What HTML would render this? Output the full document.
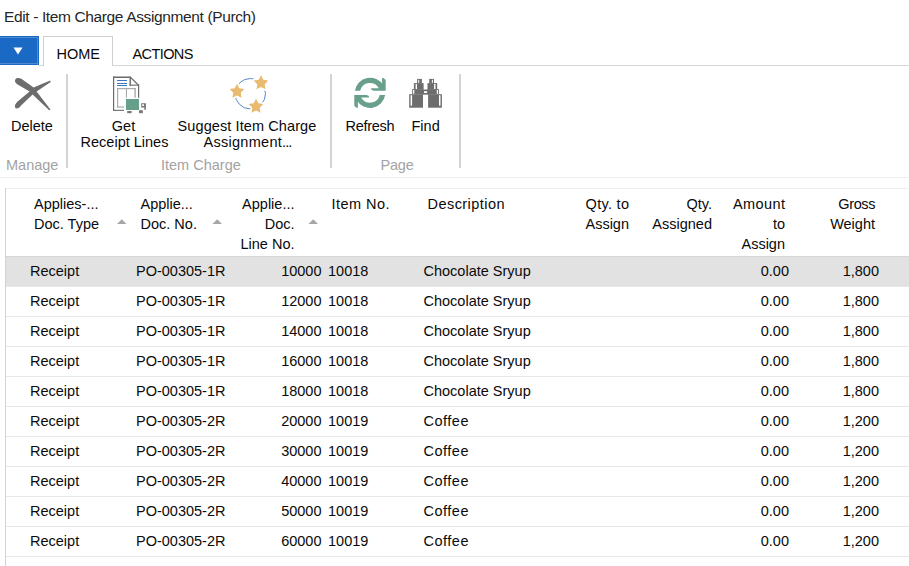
<!DOCTYPE html>
<html><head><meta charset="utf-8">
<style>
*{box-sizing:border-box}
html,body{margin:0;padding:0}
body{width:909px;height:566px;overflow:hidden;background:#fff;position:relative;font-family:"Liberation Sans",sans-serif;color:#0a0a0a}
.t{position:absolute;white-space:nowrap;line-height:20px;font-size:14.5px}
.g{color:#a3a3a3}
.ln{position:absolute}
svg{position:absolute;left:0;top:0;overflow:visible}
</style></head><body>
<div class="t " style="top:6.80px;font-size:15.5px;letter-spacing:-0.37px;left:4px;color:#262626;">Edit - Item Charge Assignment (Purch)</div>
<div style="position:absolute;left:0;top:36px;width:39px;height:29px;background:#1a69c4;box-shadow:inset -1px 1px 0 #1a69c4, inset -2px 2px 0 #4c8ad2, inset 0 -1px 0 #1a69c4, inset 0 -2px 0 #4c8ad2"></div>
<div class="ln" style="left:39px;top:65px;width:870px;height:1px;background:#d6d6d6"></div>
<div style="position:absolute;left:43px;top:36px;width:70px;height:30px;background:#fff;border:1px solid #cfcfcf;border-bottom:none"></div>
<div class="t " style="top:43.80px;left:56.5px;">HOME</div>
<div class="t " style="top:43.80px;letter-spacing:-0.6px;left:132.5px;">ACTIONS</div>
<div class="ln" style="left:66px;top:74px;width:2px;height:94px;background:#d3d3d3"></div>
<div class="ln" style="left:330px;top:74px;width:2px;height:94px;background:#d3d3d3"></div>
<div class="ln" style="left:459px;top:74px;width:2px;height:94px;background:#d3d3d3"></div>
<div class="ln" style="left:0;top:177px;width:909px;height:1px;background:#efefef"></div>
<div class="t " style="top:116.00px;left:11px;">Delete</div>
<div class="t g" style="top:155.00px;left:6px;">Manage</div>
<div class="t " style="top:116.00px;left:-26.5px;width:300px;text-align:center;">Get</div>
<div class="t " style="top:131.50px;left:-25.5px;width:300px;text-align:center;">Receipt Lines</div>
<div class="t " style="top:116.00px;letter-spacing:0.1px;left:97px;width:300px;text-align:center;">Suggest Item Charge</div>
<div class="t " style="top:131.50px;left:203.5px;"><span style="letter-spacing:0.28px">Assignment</span><span style="letter-spacing:-0.9px">...</span></div>
<div class="t g" style="top:155.00px;left:161px;">Item Charge</div>
<div class="t " style="top:116.00px;letter-spacing:-0.3px;left:345.5px;">Refresh</div>
<div class="t " style="top:116.00px;left:411.5px;">Find</div>
<div class="t g" style="top:155.00px;letter-spacing:-0.2px;left:380.5px;">Page</div>
<div class="ln" style="left:5px;top:188px;width:904px;height:1px;background:#eeeeee"></div>
<div class="ln" style="left:5px;top:188px;width:1px;height:378px;background:#d3d3d3"></div>
<div class="ln" style="left:6px;top:256px;width:903px;height:30px;background:#e2e2e2"></div>
<div class="ln" style="left:6px;top:256px;width:903px;height:1px;background:#d6d6d6"></div>
<div class="ln" style="left:6px;top:286px;width:903px;height:1px;background:#e8e8e8"></div>
<div class="ln" style="left:6px;top:316px;width:903px;height:1px;background:#e8e8e8"></div>
<div class="ln" style="left:6px;top:346px;width:903px;height:1px;background:#e8e8e8"></div>
<div class="ln" style="left:6px;top:376px;width:903px;height:1px;background:#e8e8e8"></div>
<div class="ln" style="left:6px;top:406px;width:903px;height:1px;background:#e8e8e8"></div>
<div class="ln" style="left:6px;top:436px;width:903px;height:1px;background:#e8e8e8"></div>
<div class="ln" style="left:6px;top:466px;width:903px;height:1px;background:#e8e8e8"></div>
<div class="ln" style="left:6px;top:496px;width:903px;height:1px;background:#e8e8e8"></div>
<div class="ln" style="left:6px;top:526px;width:903px;height:1px;background:#e8e8e8"></div>
<div class="ln" style="left:6px;top:556px;width:903px;height:1px;background:#e8e8e8"></div>
<div class="t " style="top:260.60px;left:30px;">Receipt</div>
<div class="t " style="top:260.60px;left:136px;">PO-00305-1R</div>
<div class="t " style="top:260.60px;right:587.5px;text-align:right;">10000</div>
<div class="t " style="top:260.60px;left:328px;">10018</div>
<div class="t " style="top:260.60px;left:423.5px;">Chocolate Sryup</div>
<div class="t " style="top:260.60px;right:120px;text-align:right;">0.00</div>
<div class="t " style="top:260.60px;right:30px;text-align:right;">1,800</div>
<div class="t " style="top:290.60px;left:30px;">Receipt</div>
<div class="t " style="top:290.60px;left:136px;">PO-00305-1R</div>
<div class="t " style="top:290.60px;right:587.5px;text-align:right;">12000</div>
<div class="t " style="top:290.60px;left:328px;">10018</div>
<div class="t " style="top:290.60px;left:423.5px;">Chocolate Sryup</div>
<div class="t " style="top:290.60px;right:120px;text-align:right;">0.00</div>
<div class="t " style="top:290.60px;right:30px;text-align:right;">1,800</div>
<div class="t " style="top:320.60px;left:30px;">Receipt</div>
<div class="t " style="top:320.60px;left:136px;">PO-00305-1R</div>
<div class="t " style="top:320.60px;right:587.5px;text-align:right;">14000</div>
<div class="t " style="top:320.60px;left:328px;">10018</div>
<div class="t " style="top:320.60px;left:423.5px;">Chocolate Sryup</div>
<div class="t " style="top:320.60px;right:120px;text-align:right;">0.00</div>
<div class="t " style="top:320.60px;right:30px;text-align:right;">1,800</div>
<div class="t " style="top:350.60px;left:30px;">Receipt</div>
<div class="t " style="top:350.60px;left:136px;">PO-00305-1R</div>
<div class="t " style="top:350.60px;right:587.5px;text-align:right;">16000</div>
<div class="t " style="top:350.60px;left:328px;">10018</div>
<div class="t " style="top:350.60px;left:423.5px;">Chocolate Sryup</div>
<div class="t " style="top:350.60px;right:120px;text-align:right;">0.00</div>
<div class="t " style="top:350.60px;right:30px;text-align:right;">1,800</div>
<div class="t " style="top:380.60px;left:30px;">Receipt</div>
<div class="t " style="top:380.60px;left:136px;">PO-00305-1R</div>
<div class="t " style="top:380.60px;right:587.5px;text-align:right;">18000</div>
<div class="t " style="top:380.60px;left:328px;">10018</div>
<div class="t " style="top:380.60px;left:423.5px;">Chocolate Sryup</div>
<div class="t " style="top:380.60px;right:120px;text-align:right;">0.00</div>
<div class="t " style="top:380.60px;right:30px;text-align:right;">1,800</div>
<div class="t " style="top:410.60px;left:30px;">Receipt</div>
<div class="t " style="top:410.60px;left:136px;">PO-00305-2R</div>
<div class="t " style="top:410.60px;right:587.5px;text-align:right;">20000</div>
<div class="t " style="top:410.60px;left:328px;">10019</div>
<div class="t " style="top:410.60px;letter-spacing:0.5px;left:423.5px;">Coffee</div>
<div class="t " style="top:410.60px;right:120px;text-align:right;">0.00</div>
<div class="t " style="top:410.60px;right:30px;text-align:right;">1,200</div>
<div class="t " style="top:440.60px;left:30px;">Receipt</div>
<div class="t " style="top:440.60px;left:136px;">PO-00305-2R</div>
<div class="t " style="top:440.60px;right:587.5px;text-align:right;">30000</div>
<div class="t " style="top:440.60px;left:328px;">10019</div>
<div class="t " style="top:440.60px;letter-spacing:0.5px;left:423.5px;">Coffee</div>
<div class="t " style="top:440.60px;right:120px;text-align:right;">0.00</div>
<div class="t " style="top:440.60px;right:30px;text-align:right;">1,200</div>
<div class="t " style="top:470.60px;left:30px;">Receipt</div>
<div class="t " style="top:470.60px;left:136px;">PO-00305-2R</div>
<div class="t " style="top:470.60px;right:587.5px;text-align:right;">40000</div>
<div class="t " style="top:470.60px;left:328px;">10019</div>
<div class="t " style="top:470.60px;letter-spacing:0.5px;left:423.5px;">Coffee</div>
<div class="t " style="top:470.60px;right:120px;text-align:right;">0.00</div>
<div class="t " style="top:470.60px;right:30px;text-align:right;">1,200</div>
<div class="t " style="top:500.60px;left:30px;">Receipt</div>
<div class="t " style="top:500.60px;left:136px;">PO-00305-2R</div>
<div class="t " style="top:500.60px;right:587.5px;text-align:right;">50000</div>
<div class="t " style="top:500.60px;left:328px;">10019</div>
<div class="t " style="top:500.60px;letter-spacing:0.5px;left:423.5px;">Coffee</div>
<div class="t " style="top:500.60px;right:120px;text-align:right;">0.00</div>
<div class="t " style="top:500.60px;right:30px;text-align:right;">1,200</div>
<div class="t " style="top:530.60px;left:30px;">Receipt</div>
<div class="t " style="top:530.60px;left:136px;">PO-00305-2R</div>
<div class="t " style="top:530.60px;right:587.5px;text-align:right;">60000</div>
<div class="t " style="top:530.60px;left:328px;">10019</div>
<div class="t " style="top:530.60px;letter-spacing:0.5px;left:423.5px;">Coffee</div>
<div class="t " style="top:530.60px;right:120px;text-align:right;">0.00</div>
<div class="t " style="top:530.60px;right:30px;text-align:right;">1,200</div>
<div class="t " style="top:193.50px;left:34px;">Applies-...</div>
<div class="t " style="top:213.90px;left:34px;">Doc. Type</div>
<div class="t " style="top:193.50px;left:140.5px;">Applie...</div>
<div class="t " style="top:213.90px;left:140.5px;">Doc. No.</div>
<div class="t " style="top:193.50px;right:614.5px;text-align:right;">Applie...</div>
<div class="t " style="top:213.90px;right:614.5px;text-align:right;">Doc.</div>
<div class="t " style="top:234.30px;right:614.5px;text-align:right;">Line No.</div>
<div class="t " style="top:193.50px;letter-spacing:0.45px;left:331.5px;">Item No.</div>
<div class="t " style="top:193.50px;letter-spacing:0.45px;left:427.5px;">Description</div>
<div class="t " style="top:193.50px;letter-spacing:0.3px;right:279.70000000000005px;text-align:right;">Qty. to</div>
<div class="t " style="top:213.90px;right:280px;text-align:right;">Assign</div>
<div class="t " style="top:193.50px;right:197px;text-align:right;">Qty.</div>
<div class="t " style="top:213.90px;right:197px;text-align:right;">Assigned</div>
<div class="t " style="top:193.50px;letter-spacing:0.4px;right:123.60000000000002px;text-align:right;">Amount</div>
<div class="t " style="top:213.90px;right:124px;text-align:right;">to</div>
<div class="t " style="top:234.30px;right:124px;text-align:right;">Assign</div>
<div class="t " style="top:193.50px;letter-spacing:-0.4px;right:34px;text-align:right;">Gross</div>
<div class="t " style="top:213.90px;right:34px;text-align:right;">Weight</div>
<svg width="909" height="566" viewBox="0 0 909 566"><polygon points="13.5,47.5 22.5,47.5 18,54.5" fill="#fff"/>
<polygon points="117,224 126.5,224 121.75,219.2" fill="#a6a6a6"/>
<polygon points="212.5,224 222.0,224 217.25,219.2" fill="#a6a6a6"/>
<polygon points="308.5,224 318.0,224 313.25,219.2" fill="#a6a6a6"/>
<path d="M15.3,79.6 C16.5,77.6 19.3,77.7 21.3,78.8 L33.6,87.4 L50.2,80.4 L50.7,81.9 L36.6,91.6 L50.6,109.7 L49.2,110.2 L32.6,94.4 L20.8,105.8 C19.2,108.6 15.8,109.2 15.1,107.6 C14.4,105.8 15.6,103.6 17.6,101.6 L29.6,91.4 L17.6,84.6 C15.2,83.2 14.4,81.2 15.3,79.6 Z" fill="#6d6d6d"/>
<g fill="#6b6b6b"><rect x="113" y="76.5" width="18" height="1.5"/><rect x="113" y="76.5" width="1.2" height="34.3"/><rect x="113" y="109.8" width="11" height="1.1"/><rect x="138" y="84.8" width="1.2" height="13"/><rect x="129.5" y="77" width="1.4" height="8.6"/><rect x="129.5" y="84.6" width="9.6" height="1.1"/><polygon points="130.5,76.5 139.2,85 138.2,85.8 129.8,77.6"/></g>
<g fill="#3c77c0"><rect x="117" y="80" width="10" height="1"/><rect x="117" y="83" width="10" height="1"/><rect x="117" y="85" width="10" height="1"/></g>
<g fill="#ababab"><rect x="117" y="88" width="19" height="1.2"/><rect x="117" y="88" width="1.2" height="19.6"/><rect x="117" y="106.4" width="7" height="1.2"/><rect x="125.9" y="88" width="1.1" height="9.7"/><rect x="134.4" y="88" width="1.4" height="9.7"/></g>
<rect x="126" y="99" width="13" height="11" fill="#67a08a"/>
<g fill="#777"><path d="M141.2,103.2 H145.9 V109.7 H144.3 V107.4 H141.2 Z M142.2,104.2 V106 H144 V104.2 Z" fill-rule="evenodd"/><rect x="127.2" y="111" width="4.4" height="2.2"/><rect x="139.1" y="110.2" width="3.7" height="3"/></g>
<circle cx="250.3" cy="93.7" r="15.2" fill="none" stroke="#5688c8" stroke-width="1"/>
<polygon points="261.00,75.30 263.29,79.84 268.32,80.62 264.71,84.21 265.53,89.23 261.00,86.90 256.47,89.23 257.29,84.21 253.68,80.62 258.71,79.84" fill="#e9bb70" stroke="#fff" stroke-width="3.4" paint-order="stroke" stroke-linejoin="round"/>
<polygon points="237.00,83.80 239.29,88.34 244.32,89.12 240.71,92.71 241.53,97.73 237.00,95.40 232.47,97.73 233.29,92.71 229.68,89.12 234.71,88.34" fill="#e9bb70" stroke="#fff" stroke-width="3.4" paint-order="stroke" stroke-linejoin="round"/>
<polygon points="256.00,98.80 258.29,103.34 263.32,104.12 259.71,107.71 260.53,112.73 256.00,110.40 251.47,112.73 252.29,107.71 248.68,104.12 253.71,103.34" fill="#e9bb70" stroke="#fff" stroke-width="3.4" paint-order="stroke" stroke-linejoin="round"/>
<g fill="#68a08b"><g><path d="M354.87,90.75 A15.3 15.3 0 0 1 383.25,85.35 L378.66,88.00 A10 10 0 0 0 360.26,90.75 Z"/><path d="M382.1,78 L383.6,78 L385.7,80 L385.7,90.75 L373.5,90.75 L371.1,89.6 L371.1,88.3 L378.5,88.3 L382.1,84 Z"/></g><g transform="rotate(180 370 92.85)"><path d="M354.87,90.75 A15.3 15.3 0 0 1 383.25,85.35 L378.66,88.00 A10 10 0 0 0 360.26,90.75 Z"/><path d="M382.1,78 L383.6,78 L385.7,80 L385.7,90.75 L373.5,90.75 L371.1,89.6 L371.1,88.3 L378.5,88.3 L382.1,84 Z"/></g></g>
<g fill="#6d6d6d"><rect x="409.2" y="94.2" width="13.8" height="13.5"/><rect x="412.2" y="89.1" width="11.4" height="5.2"/><rect x="413.9" y="83.1" width="9.7" height="6.1"/><rect x="417.1" y="78.9" width="4.8" height="4.3"/><g transform="translate(851.1 0) scale(-1 1)"><rect x="409.2" y="94.2" width="13.8" height="13.5"/><rect x="412.2" y="89.1" width="11.4" height="5.2"/><rect x="413.9" y="83.1" width="9.7" height="6.1"/><rect x="417.1" y="78.9" width="4.8" height="4.3"/></g><rect x="422.5" y="89.5" width="6.1" height="5.1"/></g>
<g fill="#fff"><rect x="410.6" y="95.2" width="1.5" height="10.5"/><rect x="413.1" y="90" width="1.2" height="3.8"/><rect x="415.6" y="84" width="1.4" height="5"/><rect x="418.2" y="79.8" width="1" height="3"/><g transform="translate(851.1 0) scale(-1 1)"><rect x="410.6" y="95.2" width="1.5" height="10.5"/><rect x="413.1" y="90" width="1.2" height="3.8"/><rect x="415.6" y="84" width="1.4" height="5"/><rect x="418.2" y="79.8" width="1" height="3"/></g><rect x="424" y="91.2" width="3.1" height="1.8"/></g></svg>
</body></html>
